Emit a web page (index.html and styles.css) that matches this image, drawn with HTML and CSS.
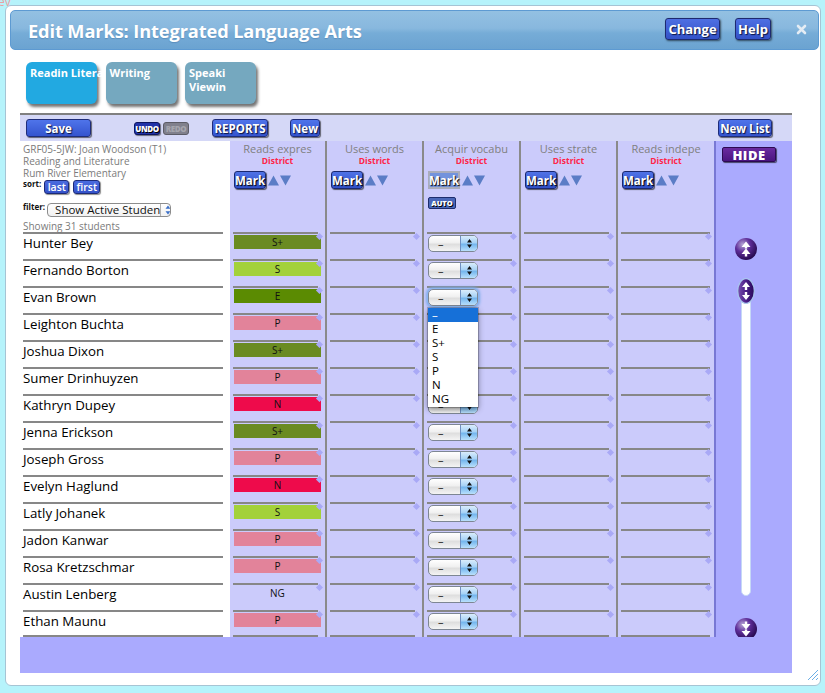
FILE: index.html
```html
<!DOCTYPE html>
<html>
<head>
<meta charset="utf-8">
<title>Edit Marks</title>
<link rel="stylesheet" href="styles.css">
</head>
<body>
<span class="ghost">ev</span>
<div class="window">
  <div class="titlebar">
    <h1 class="title">Edit Marks: Integrated Language Arts</h1>
    <span class="hbtn change">Change</span>
    <span class="hbtn help">Help</span>
    <svg class="close" width="11" height="11" viewBox="0 0 11 11"><path d="M2 2 L9 9 M9 2 L2 9" stroke="#e4ecf4" stroke-width="2.6" stroke-linecap="round"/></svg>
  </div>

  <div class="tabs">
    <div class="tab active nowrap">Readin Litera</div>
    <div class="tab">Writing</div>
    <div class="tab">Speaki Viewin</div>
  </div>

  <div class="sheet">
    <div class="toolbar">
      <span class="tbtn save">Save</span>
      <span class="mini undo">UNDO</span>
      <span class="mini redo">REDO</span>
      <span class="tbtn reports">REPORTS</span>
      <span class="tbtn new">New</span>
      <span class="tbtn newlist">New List</span>
    </div>

    <div class="main">
      <div class="students">
        <div class="shead">
          <div class="info">GRF05-5JW: Joan Woodson (T1)</div>
          <div class="info">Reading and Literature</div>
          <div class="info">Rum River Elementary</div>
          <div class="sort">
            <span class="lbl">sort:</span>
            <span class="sbtn last">last</span>
            <span class="sbtn first">first</span>
          </div>
          <div class="filter">
            <span class="lbl">filter:</span>
            <span class="fsel"><span class="fval">Show Active Studen</span><span class="fstep"><svg width="14" height="12" viewBox="0 0 14 12"><path d="M7 1.5 L4.5 4.8 H9.5 Z M7 10.5 L4.5 7.2 H9.5 Z" fill="#3a6fc8"/></svg></span></span>
          </div>
          <div class="showing">Showing 31 students</div>
        </div>
        <div class="srow">Hunter Bey</div>
        <div class="srow">Fernando Borton</div>
        <div class="srow">Evan Brown</div>
        <div class="srow">Leighton Buchta</div>
        <div class="srow">Joshua Dixon</div>
        <div class="srow">Sumer Drinhuyzen</div>
        <div class="srow">Kathryn Dupey</div>
        <div class="srow">Jenna Erickson</div>
        <div class="srow">Joseph Gross</div>
        <div class="srow">Evelyn Haglund</div>
        <div class="srow">Latly Johanek</div>
        <div class="srow">Jadon Kanwar</div>
        <div class="srow">Rosa Kretzschmar</div>
        <div class="srow">Austin Lenberg</div>
        <div class="srow">Ethan Maunu</div>
      </div>

      <!-- Column 1 -->
      <div class="col">
        <div class="chead">
          <div class="ctitle">Reads expres</div>
          <div class="district">District</div>
          <div class="markrow"><span class="mark">Mark</span><svg class="tri" width="23" height="11" viewBox="0 0 23 11"><path d="M5.5 0.5 L11 10.5 H0 Z M12 0.5 H23 L17.5 10.5 Z" fill="#5b7dc6"/></svg></div>
        </div>
        <div class="cell"><div class="bar sp">S+</div></div>
        <div class="cell"><div class="bar s">S</div></div>
        <div class="cell"><div class="bar e">E</div></div>
        <div class="cell"><div class="bar p">P</div></div>
        <div class="cell"><div class="bar sp">S+</div></div>
        <div class="cell"><div class="bar p">P</div></div>
        <div class="cell"><div class="bar n">N</div></div>
        <div class="cell"><div class="bar sp">S+</div></div>
        <div class="cell"><div class="bar p">P</div></div>
        <div class="cell"><div class="bar n">N</div></div>
        <div class="cell"><div class="bar s">S</div></div>
        <div class="cell"><div class="bar p">P</div></div>
        <div class="cell"><div class="bar p">P</div></div>
        <div class="cell"><div class="bar ng">NG</div></div>
        <div class="cell"><div class="bar p">P</div></div>
      </div>

      <!-- Column 2 -->
      <div class="col">
        <div class="chead">
          <div class="ctitle">Uses words</div>
          <div class="district">District</div>
          <div class="markrow"><span class="mark">Mark</span><svg class="tri" width="23" height="11" viewBox="0 0 23 11"><path d="M5.5 0.5 L11 10.5 H0 Z M12 0.5 H23 L17.5 10.5 Z" fill="#5b7dc6"/></svg></div>
        </div>
        <div class="cell"></div><div class="cell"></div><div class="cell"></div><div class="cell"></div><div class="cell"></div>
        <div class="cell"></div><div class="cell"></div><div class="cell"></div><div class="cell"></div><div class="cell"></div>
        <div class="cell"></div><div class="cell"></div><div class="cell"></div><div class="cell"></div><div class="cell"></div>
      </div>

      <!-- Column 3 -->
      <div class="col">
        <div class="chead">
          <div class="ctitle">Acquir vocabu</div>
          <div class="district">District</div>
          <div class="markrow"><span class="mark pressed">Mark</span><svg class="tri" width="23" height="11" viewBox="0 0 23 11"><path d="M5.5 0.5 L11 10.5 H0 Z M12 0.5 H23 L17.5 10.5 Z" fill="#5b7dc6"/></svg></div>
          <span class="auto">AUTO</span>
        </div>
        <div class="cell"><div class="sel"><span class="sv">–</span><span class="ss"><svg width="15" height="15" viewBox="0 0 15 15"><path d="M7.5 3 L5 6.5 H10 Z M7.5 12 L5 8.5 H10 Z" fill="#111"/></svg></span></div></div>
        <div class="cell"><div class="sel"><span class="sv">–</span><span class="ss"><svg width="15" height="15" viewBox="0 0 15 15"><path d="M7.5 3 L5 6.5 H10 Z M7.5 12 L5 8.5 H10 Z" fill="#111"/></svg></span></div></div>
        <div class="cell"><div class="sel focus"><span class="sv">–</span><span class="ss"><svg width="15" height="15" viewBox="0 0 15 15"><path d="M7.5 3 L5 6.5 H10 Z M7.5 12 L5 8.5 H10 Z" fill="#111"/></svg></span></div>
          <ul class="dropdown">
            <li class="hl">–</li>
            <li>E</li>
            <li>S+</li>
            <li>S</li>
            <li>P</li>
            <li>N</li>
            <li>NG</li>
          </ul>
        </div>
        <div class="cell"><div class="sel"><span class="sv">–</span><span class="ss"><svg width="15" height="15" viewBox="0 0 15 15"><path d="M7.5 3 L5 6.5 H10 Z M7.5 12 L5 8.5 H10 Z" fill="#111"/></svg></span></div></div>
        <div class="cell"><div class="sel"><span class="sv">–</span><span class="ss"><svg width="15" height="15" viewBox="0 0 15 15"><path d="M7.5 3 L5 6.5 H10 Z M7.5 12 L5 8.5 H10 Z" fill="#111"/></svg></span></div></div>
        <div class="cell"><div class="sel"><span class="sv">–</span><span class="ss"><svg width="15" height="15" viewBox="0 0 15 15"><path d="M7.5 3 L5 6.5 H10 Z M7.5 12 L5 8.5 H10 Z" fill="#111"/></svg></span></div></div>
        <div class="cell"><div class="sel"><span class="sv">–</span><span class="ss"><svg width="15" height="15" viewBox="0 0 15 15"><path d="M7.5 3 L5 6.5 H10 Z M7.5 12 L5 8.5 H10 Z" fill="#111"/></svg></span></div></div>
        <div class="cell"><div class="sel"><span class="sv">–</span><span class="ss"><svg width="15" height="15" viewBox="0 0 15 15"><path d="M7.5 3 L5 6.5 H10 Z M7.5 12 L5 8.5 H10 Z" fill="#111"/></svg></span></div></div>
        <div class="cell"><div class="sel"><span class="sv">–</span><span class="ss"><svg width="15" height="15" viewBox="0 0 15 15"><path d="M7.5 3 L5 6.5 H10 Z M7.5 12 L5 8.5 H10 Z" fill="#111"/></svg></span></div></div>
        <div class="cell"><div class="sel"><span class="sv">–</span><span class="ss"><svg width="15" height="15" viewBox="0 0 15 15"><path d="M7.5 3 L5 6.5 H10 Z M7.5 12 L5 8.5 H10 Z" fill="#111"/></svg></span></div></div>
        <div class="cell"><div class="sel"><span class="sv">–</span><span class="ss"><svg width="15" height="15" viewBox="0 0 15 15"><path d="M7.5 3 L5 6.5 H10 Z M7.5 12 L5 8.5 H10 Z" fill="#111"/></svg></span></div></div>
        <div class="cell"><div class="sel"><span class="sv">–</span><span class="ss"><svg width="15" height="15" viewBox="0 0 15 15"><path d="M7.5 3 L5 6.5 H10 Z M7.5 12 L5 8.5 H10 Z" fill="#111"/></svg></span></div></div>
        <div class="cell"><div class="sel"><span class="sv">–</span><span class="ss"><svg width="15" height="15" viewBox="0 0 15 15"><path d="M7.5 3 L5 6.5 H10 Z M7.5 12 L5 8.5 H10 Z" fill="#111"/></svg></span></div></div>
        <div class="cell"><div class="sel"><span class="sv">–</span><span class="ss"><svg width="15" height="15" viewBox="0 0 15 15"><path d="M7.5 3 L5 6.5 H10 Z M7.5 12 L5 8.5 H10 Z" fill="#111"/></svg></span></div></div>
        <div class="cell"><div class="sel"><span class="sv">–</span><span class="ss"><svg width="15" height="15" viewBox="0 0 15 15"><path d="M7.5 3 L5 6.5 H10 Z M7.5 12 L5 8.5 H10 Z" fill="#111"/></svg></span></div></div>
      </div>

      <!-- Column 4 -->
      <div class="col">
        <div class="chead">
          <div class="ctitle">Uses strate</div>
          <div class="district">District</div>
          <div class="markrow"><span class="mark">Mark</span><svg class="tri" width="23" height="11" viewBox="0 0 23 11"><path d="M5.5 0.5 L11 10.5 H0 Z M12 0.5 H23 L17.5 10.5 Z" fill="#5b7dc6"/></svg></div>
        </div>
        <div class="cell"></div><div class="cell"></div><div class="cell"></div><div class="cell"></div><div class="cell"></div>
        <div class="cell"></div><div class="cell"></div><div class="cell"></div><div class="cell"></div><div class="cell"></div>
        <div class="cell"></div><div class="cell"></div><div class="cell"></div><div class="cell"></div><div class="cell"></div>
      </div>

      <!-- Column 5 -->
      <div class="col lastcol">
        <div class="chead">
          <div class="ctitle">Reads indepe</div>
          <div class="district">District</div>
          <div class="markrow"><span class="mark">Mark</span><svg class="tri" width="23" height="11" viewBox="0 0 23 11"><path d="M5.5 0.5 L11 10.5 H0 Z M12 0.5 H23 L17.5 10.5 Z" fill="#5b7dc6"/></svg></div>
        </div>
        <div class="cell"></div><div class="cell"></div><div class="cell"></div><div class="cell"></div><div class="cell"></div>
        <div class="cell"></div><div class="cell"></div><div class="cell"></div><div class="cell"></div><div class="cell"></div>
        <div class="cell"></div><div class="cell"></div><div class="cell"></div><div class="cell"></div><div class="cell"></div>
      </div>

      <div class="side">
        <span class="hide">HIDE</span>
        <div class="sline"></div>
        <svg class="ball" width="22" height="22" viewBox="0 0 22 22">
          <defs><radialGradient id="bg1" cx="0.35" cy="0.3" r="0.75"><stop offset="0" stop-color="#b7a6d6"/><stop offset="0.45" stop-color="#5e2d99"/><stop offset="1" stop-color="#22084a"/></radialGradient></defs>
          <circle cx="11" cy="11" r="11" fill="url(#bg1)"/>
          <path d="M11 3.5 L6.5 9 H9.8 V10.5 H12.2 V9 H15.5 Z M11 10.5 L6.5 16 H9.8 V18.5 H12.2 V16 H15.5 Z" fill="#fff"/>
        </svg>
        <svg class="thumb" width="18" height="26" viewBox="0 0 18 26">
          <defs><linearGradient id="tg" x1="0" y1="0" x2="1" y2="0"><stop offset="0" stop-color="#7a52b0"/><stop offset="0.5" stop-color="#4a1d88"/><stop offset="1" stop-color="#2a0a5a"/></linearGradient></defs>
          <ellipse cx="9" cy="13" rx="8.3" ry="12.3" fill="url(#tg)" stroke="#a9c8ee" stroke-width="1.2"/>
          <path d="M9 4 L5 9 H7.8 V12 H10.2 V9 H13 Z M9 22 L5 17 H7.8 V14 H10.2 V17 H13 Z" fill="#fff"/>
        </svg>
        <div class="track"></div>
        <svg class="ball ball2" width="22" height="22" viewBox="0 0 22 22">
          <defs><radialGradient id="bg2" cx="0.35" cy="0.3" r="0.75"><stop offset="0" stop-color="#b7a6d6"/><stop offset="0.45" stop-color="#5e2d99"/><stop offset="1" stop-color="#22084a"/></radialGradient></defs>
          <circle cx="11" cy="11" r="11" fill="url(#bg2)"/>
          <path d="M11 18.5 L6.5 13 H9.8 V11.5 H12.2 V13 H15.5 Z M11 11.5 L6.5 6 H9.8 V3.5 H12.2 V6 H15.5 Z" fill="#fff"/>
        </svg>
      </div>
    </div>
    <div class="band"></div>
  </div>

  <svg class="grip" width="12" height="12" viewBox="0 0 12 12"><path d="M11 1 L1 11 M11 5 L5 11 M11 9 L9 11" stroke="#6aaee6" stroke-width="1"/></svg>
</div>
</body>
</html>
```

FILE: styles.css
```css
html, body {
  margin: 0;
  padding: 0;
}
body {
  background: #b6f3fb;
  font-family: "Open Sans", "DejaVu Sans", sans-serif;
  width: 825px;
  height: 693px;
  overflow: hidden;
  position: relative;
}
.ghost {
  position: absolute;
  left: -2px;
  top: -7px;
  font-size: 12px;
  color: #e7a3a3;
}

.window {
  box-sizing: border-box;
  width: 816px;
  height: 681px;
  margin: 5px 0 0 5px;
  border: 1px solid #a6c4d4;
  border-radius: 6px;
  background: #fff;
  padding: 4px 1px 0 4px;
  position: relative;
}

/* Title bar */
.titlebar {
  box-sizing: border-box;
  height: 40px;
  border: 1px solid #5d9ad2;
  border-radius: 5px;
  background: linear-gradient(180deg, #93c0e2 0%, #88b8de 45%, #76acd7 58%, #6ba3d1 100%);
  display: flex;
  align-items: center;
  padding: 0 11px 0 17px;
}
.title {
  flex: 1;
  margin: 0;
  font-size: 18.2px;
  font-weight: 700;
  color: #fff;
  text-shadow: 0 1px 1px rgba(30, 70, 120, .25);
  letter-spacing: -0.1px;
  padding-top: 1px;
}
.hbtn {
  box-sizing: border-box;
  height: 22px;
  margin-top: -2px;
  display: flex;
  align-items: center;
  justify-content: center;
  border: 1px solid #1d2a70;
  border-radius: 3px;
  background: linear-gradient(180deg, #4e6fe2, #3352c8);
  color: #fff;
  font-size: 13px;
  font-weight: 700;
  text-shadow: 1px 1px 1px #0b1440;
  box-shadow: 1px 1px 2px rgba(0, 0, 0, .55);
}
.change { width: 55px; margin-right: 15px; }
.help { width: 36px; }
.close { margin-left: 25px; margin-top: -1px; }

/* Tabs */
.tabs {
  display: flex;
  gap: 8.5px;
  margin: 12px 0 0 16px;
}
.tab {
  box-sizing: border-box;
  width: 71px;
  height: 42px;
  padding: 4px 4px;
  border-radius: 6px;
  background: #75a8bf;
  color: #fff;
  font-size: 11px;
  font-weight: 700;
  line-height: 14px;
  box-shadow: 2px 3px 3px rgba(0, 0, 0, .55);
}
.tab.active { background: #22a9e1; }
.nowrap { white-space: nowrap; }

/* Sheet */
.sheet {
  width: 772px;
  margin: 9px 0 0 10px;
  border-top: 2px solid #808080;
}
.toolbar {
  height: 26px;
  background: #d5d8f7;
  display: flex;
  align-items: center;
}
.tbtn {
  box-sizing: border-box;
  height: 18px;
  display: flex;
  align-items: center;
  justify-content: center;
  border: 1px solid #1f2d7a;
  border-radius: 3px;
  background: linear-gradient(180deg, #4f74ea, #3454cf);
  color: #fff;
  font-size: 11.5px;
  font-weight: 700;
  text-shadow: 1px 1px 1px #0b1440;
  box-shadow: 1px 1px 1px rgba(0, 0, 0, .55);
}
.save { width: 65px; margin-left: 6px; }
.reports { width: 56px; margin-left: 23px; }
.new { width: 30px; margin-left: 22px; }
.newlist { width: 54px; margin-left: auto; margin-right: 20px; }
.mini {
  box-sizing: border-box;
  width: 26px;
  height: 13px;
  display: flex;
  align-items: center;
  justify-content: center;
  border-radius: 3px;
  font-size: 8px;
  font-weight: 800;
  letter-spacing: -0.4px;
}
.undo {
  margin-left: 43px;
  background: #2233a8;
  border: 1px solid #0e1660;
  color: #fff;
  text-shadow: 1px 1px 0 #000;
  box-shadow: 1px 1px 1px rgba(0, 0, 0, .5);
}
.redo {
  margin-left: 3px;
  background: #80808c;
  border: 1px solid #5c5c66;
  color: #a5a5ad;
}

.main {
  display: flex;
  height: 496px;
}

/* Students */
.students {
  width: 210px;
  background: #fff;
}
.shead {
  box-sizing: border-box;
  height: 91px;
  padding: 2px 0 0 3px;
}
.info {
  font-size: 10px;
  line-height: 12px;
  color: #7b7b7b;
  white-space: nowrap;
}
.lbl {
  font-size: 8px;
  font-weight: 700;
  line-height: 9px;
  color: #111;
}
.sort {
  display: flex;
  align-items: flex-start;
  gap: 3px;
  height: 16px;
}
.sbtn {
  box-sizing: border-box;
  height: 14px;
  margin-top: 1px;
  display: flex;
  align-items: center;
  justify-content: center;
  border: 1px solid #1c2a78;
  border-radius: 3px;
  background: linear-gradient(180deg, #4b6ce0, #3452c8);
  color: #fff;
  font-size: 10.5px;
  font-weight: 600;
  box-shadow: 1px 1px 1px rgba(0, 0, 0, .45);
}
.last { width: 25px; }
.first { width: 27px; margin-left: 1px; }
.filter {
  display: flex;
  align-items: flex-start;
  margin-top: 7px;
}
.fsel {
  box-sizing: border-box;
  width: 124px;
  height: 14px;
  margin-left: 2px;
  margin-top: 1px;
  display: flex;
  border: 1px solid #8c8c8c;
  border-radius: 4px;
  background: linear-gradient(180deg, #fff, #f1f1f1);
  overflow: hidden;
}
.fval {
  flex: 1;
  font-size: 11.5px;
  line-height: 12px;
  padding-left: 7px;
  color: #111;
  white-space: nowrap;
}
.fstep {
  width: 15px;
  border-left: 1px solid #b0b0b0;
  display: flex;
  align-items: center;
  justify-content: center;
}
.showing {
  margin-top: 3px;
  font-size: 10px;
  line-height: 12px;
  color: #7b7b7b;
}
.srow {
  box-sizing: border-box;
  height: 27px;
  margin: 0 7px 0 3px;
  border-top: 2px solid #878787;
  font-size: 13.3px;
  line-height: 18px;
  color: #000;
}
.srow:last-child { border-bottom: 2px solid #878787; }

/* Mark columns */
.col {
  box-sizing: border-box;
  width: 97px;
  border-right: 2px solid #8a8a8a;
  background: #cbcbfb;
}
.col.lastcol {
  width: 96px;
  border-right: none;
}
.chead {
  box-sizing: border-box;
  height: 91px;
  padding-top: 1px;
}
.ctitle {
  text-align: center;
  font-size: 11px;
  line-height: 14px;
  color: #808080;
  white-space: nowrap;
}
.district {
  text-align: center;
  font-size: 8.5px;
  font-weight: 700;
  line-height: 10px;
  color: #ff2448;
}
.markrow {
  display: flex;
  align-items: center;
  gap: 2px;
  margin: 5px 0 0 4px;
}
.mark {
  box-sizing: border-box;
  width: 32px;
  height: 18px;
  display: flex;
  align-items: center;
  justify-content: center;
  border: 1px solid #1a2870;
  border-radius: 3px;
  background: linear-gradient(180deg, #4f72e6, #3150c8);
  color: #fff;
  font-size: 11.5px;
  font-weight: 700;
  text-shadow: 1px 1px 1px #000;
  box-shadow: 1px 1px 1px rgba(0, 0, 0, .6);
}
.mark.pressed {
  border: 2px solid #a9acbc;
  border-radius: 0;
  background: #7393dc;
  box-shadow: none;
}
.auto {
  box-sizing: border-box;
  display: flex;
  align-items: center;
  justify-content: center;
  width: 28px;
  height: 12px;
  margin: 8px 0 0 4px;
  border: 1px solid #1d2c6c;
  border-radius: 2px;
  background: #4a67b8;
  color: #fff;
  font-size: 7.5px;
  font-weight: 800;
  text-shadow: 1px 1px 0 #000;
}

.cell {
  box-sizing: border-box;
  height: 27px;
  margin: 0 7px 0 3px;
  border-top: 2px solid #878787;
  padding-top: 1px;
  position: relative;
}
.cell:last-child { border-bottom: 2px solid #878787; }
.lastcol .cell { margin-right: 4px; }
.cell::after {
  content: "";
  position: absolute;
  top: 0;
  right: -4px;
  width: 5px;
  height: 5px;
  background: #a9a9f6;
  transform: rotate(45deg);
}
.lastcol .cell::after { right: -1px; }
.bar {
  height: 14px;
  margin: 0 -3px 0 1px;
  font-size: 10px;
  line-height: 14px;
  text-align: center;
  color: #111;
}
.bar.sp { background: #6a8b22; }
.bar.s { background: #a3d13a; }
.bar.e { background: #5b8b02; }
.bar.p { background: #e2839a; }
.bar.n { background: #ee0b4b; }
.bar.ng { background: transparent; }

.sel {
  box-sizing: border-box;
  width: 50px;
  height: 17px;
  margin-left: 1px;
  display: flex;
  border: 1px solid #7d8693;
  border-radius: 5px;
  overflow: hidden;
  background: linear-gradient(180deg, #ffffff 0%, #f0f0f0 45%, #dedede 55%, #f4f4f4 100%);
}
.sel.focus {
  box-shadow: 0 0 0 1px #8cb6ee, 0 0 3px 2px #79a9e8;
}
.sv {
  flex: 1;
  font-size: 11px;
  line-height: 15px;
  padding-left: 9px;
  color: #222;
}
.ss {
  width: 16px;
  border-left: 1px solid #6f8fc0;
  display: flex;
  align-items: center;
  justify-content: center;
  background: linear-gradient(180deg, #d9ecfc 0%, #a6d2f6 45%, #74b6ee 55%, #b9e0fc 100%);
}

.dropdown {
  position: absolute;
  left: 1px;
  top: 20px;
  z-index: 5;
  width: 50px;
  margin: 0;
  padding: 0 0 1px 0;
  list-style: none;
  background: #fff;
  box-shadow: 0 2px 6px rgba(0, 0, 0, .45), 0 0 0 1px rgba(0, 0, 0, .2);
}
.dropdown li {
  height: 14px;
  line-height: 14px;
  font-size: 11.5px;
  padding-left: 4px;
  color: #000;
}
.dropdown li.hl {
  background: #1670d8;
  color: #fff;
}

/* Side panel */
.side {
  box-sizing: border-box;
  width: 78px;
  border-left: 2px solid #7878d4;
  background: #aaaafe;
  overflow: hidden;
  display: flex;
  flex-direction: column;
  align-items: flex-start;
}
.hide {
  box-sizing: border-box;
  width: 54px;
  height: 15px;
  margin: 6px 0 0 6px;
  display: flex;
  align-items: center;
  justify-content: center;
  background: linear-gradient(180deg, #6a2aa0, #4a1580);
  border: 1px solid #2c0a52;
  border-radius: 2px;
  color: #fff;
  font-size: 13px;
  font-weight: 800;
  letter-spacing: 0.5px;
  box-shadow: 1px 1px 1px rgba(0, 0, 0, .6);
}
.sline {
  align-self: stretch;
  height: 2px;
  margin: 70px 3px 0 4px;
  background: #878787;
}
.ball {
  display: block;
  margin: 6px 0 0 19px;
  flex: none;
}
.thumb {
  display: block;
  margin: 18px 0 0 21px;
  flex: none;
  position: relative;
  z-index: 1;
}
.track {
  box-sizing: border-box;
  width: 10px;
  height: 295px;
  margin: -3px 0 0 25px;
  background: #fff;
  border: 1px solid #c6d8f6;
  border-radius: 0 0 5px 5px;
  flex: none;
}
.ball2 { margin-top: 22px; }

.band {
  height: 36px;
  background: #aaaafe;
}

.grip {
  position: absolute;
  right: 1px;
  bottom: 4px;
}
```
